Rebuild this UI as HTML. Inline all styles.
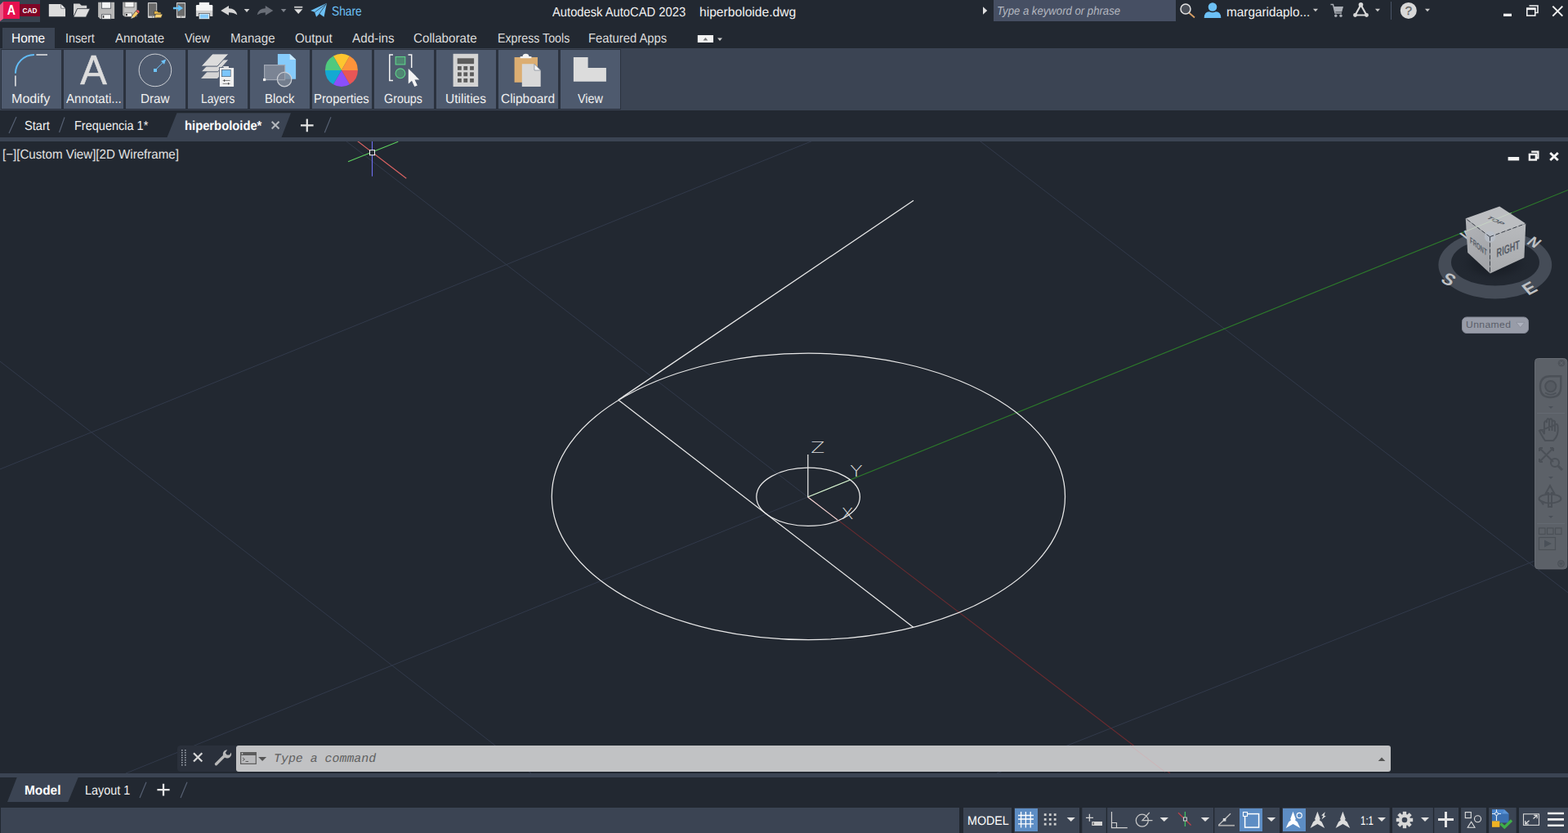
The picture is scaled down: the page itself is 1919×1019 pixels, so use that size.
<!DOCTYPE html>
<html lang="en">
<head>
<meta charset="utf-8">
<title>Autodesk AutoCAD 2023 - hiperboloide.dwg</title>
<style>
*{box-sizing:border-box;margin:0;padding:0}
html,body{width:1919px;height:1019px;overflow:hidden;background:#222831;}
body{position:relative;font-family:"Liberation Sans",sans-serif;color:#e6e6e6;font-size:15px;}
.abs{position:absolute}
.t{position:absolute;white-space:nowrap;line-height:1;transform-origin:0 0;text-rendering:geometricPrecision;}
svg{position:absolute;overflow:visible}
/* title bar */
#appbtn{left:0;top:0;width:49px;height:27px;background:#38424f}
#title1,#title2{top:8px;font-size:16px;color:#f0f0f0}
#search{left:1216px;top:0;width:223px;height:26px;background:#464f63}
#searchtx{left:1220px;top:7px;font-size:14.4px;font-style:italic;color:#b4b8c0}
/* menu */
.menu{top:40px;font-size:16px;color:#dcdcdc}
#hometab{left:3px;top:34px;width:64.2px;height:25px;background:#3b4453}
/* ribbon */
#ribbon{left:0;top:59px;width:1919px;height:76px;background:#3b4453}
.rb{position:absolute;top:60px;width:75px;height:74px;background:#4e5a6e;border:1px solid #2b323e}
.rl{top:114px;font-size:16px;color:#f0f0f0}
/* file tabs */
.ft{top:147px;font-size:16px;color:#f0f0f0}
#bar1{left:0;top:168px;width:1919px;height:5px;background:#3b4453}
#bar2{left:0;top:946px;width:1919px;height:5px;background:#3b4453}
#status{left:1px;top:988px;width:1918px;height:31px;background:#3b4453}
.lt{top:960px;font-size:16px;color:#f0f0f0}
</style>
</head>
<body>
<!-- ===== TITLE BAR ===== -->
<div id="appbtn" class="abs"></div>
<div id="title1" class="t" style="left:675.77px;transform:scaleX(0.9213)">Autodesk AutoCAD 2023</div>
<div id="title2" class="t" style="left:855.6px;transform:scaleX(0.9774)">hiperboloide.dwg</div>
<div id="search" class="abs"></div>
<div id="searchtx" style="left:1219.74px;transform:scaleX(0.9136)" class="t">Type a keyword or phrase</div>
<svg id="ticons" width="1919" height="1019" viewBox="0 0 1919 1019" style="left:0;top:0;pointer-events:none">
<!-- logo -->
<polygon points="0,6 4,2 4,23 0,26" fill="#e85a86"/>
<rect x="4" y="2" width="20" height="21" fill="#e6114f"/>
<rect x="24" y="5" width="25" height="15" fill="#7f0626"/>
<text x="8.8" y="18" font-family="Liberation Sans, sans-serif" font-weight="bold" font-size="15.8" fill="#fff" textLength="10.2" lengthAdjust="spacingAndGlyphs">A</text>
<text x="27.6" y="15.8" font-family="Liberation Sans, sans-serif" font-weight="bold" font-size="9.4" fill="#fff" textLength="17.8" lengthAdjust="spacingAndGlyphs">CAD</text>
<!-- new -->
<path d="M59.8 4.9H74.7L80 10.2V20.2H59.8Z" fill="#dcdcdc"/><path d="M74.7 4.9V10.2H80Z" fill="#f6f6f6" stroke="#3a3f48" stroke-width="0.6"/>
<!-- open -->
<path d="M90 4.4H97.4L99.8 6.8H106.2V10.5H94.4L90 20Z" fill="#d2d2d2"/><path d="M94.6 10.6H110.2L105.2 20.9H90Z" fill="#dedede" stroke="#2a2f38" stroke-width="0.7"/>
<!-- save -->
<path d="M120.1 2.8H140.1V23H122.5L120.1 20.3Z" fill="#b8b8b8"/><rect x="124.5" y="2.5" width="11.2" height="7.7" fill="#f4f4f4" stroke="#3a3f48" stroke-width="0.7"/><rect x="124.5" y="17.8" width="11.2" height="5.5" fill="#f4f4f4" stroke="#3a3f48" stroke-width="0.7"/><rect x="125.8" y="19" width="1.5" height="3" fill="#333"/>
<!-- saveas -->
<path d="M150.1 2.8H167.5V20.3H152.3L150.1 18.2Z" fill="#c2c2c2"/><rect x="150.1" y="2.8" width="1.6" height="15" fill="#9a9a9a"/><rect x="152.9" y="2.5" width="11.1" height="6.4" fill="#f4f4f4" stroke="#555" stroke-width="0.7"/><rect x="152.9" y="15.9" width="8.8" height="4.4" fill="#f4f4f4" stroke="#555" stroke-width="0.6"/><rect x="153.9" y="16.9" width="2" height="2.4" fill="#333"/>
<path d="M160.3 22.7L161.6 19.4L166.3 13.4L169.6 16.2L164.6 21.6Z" fill="#f6c868" stroke="#2a2f38" stroke-width="0.7"/><path d="M166.3 13.4L167.4 12.3Q168.6 11.6 169.6 12.6L170.5 13.6Q171 14.8 170.4 15.4L169.6 16.2Z" fill="#f25f5f" stroke="#2a2f38" stroke-width="0.5"/><path d="M160.3 22.7L161.4 19.9L163.6 21.6Z" fill="#c8c8c8"/>
<!-- open mobile -->
<rect x="180.9" y="3" width="11.3" height="19" rx="1" fill="#cfcfcf"/><rect x="182" y="4.2" width="9.2" height="15.4" fill="#6a6a6a"/><circle cx="186.5" cy="20.8" r="0.6" fill="#555"/>
<path d="M188.6 13.6H192.6L193.8 15H197V17.6H188.6Z" fill="#e6b84c" stroke="#2a2f38" stroke-width="0.6"/><path d="M190.5 17.2H199L197.2 21.8H188.9Z" fill="#fad274" stroke="#2a2f38" stroke-width="0.6"/>
<!-- save mobile -->
<rect x="215.9" y="3" width="11.2" height="19" rx="1" fill="#cfcfcf"/><rect x="216.9" y="4.2" width="9.2" height="15.4" fill="#6a6a6a"/><circle cx="221.5" cy="20.8" r="0.6" fill="#555"/>
<path d="M211.9 8.8H218V5.8L224 10L218 14V11.2H211.9Z" fill="#66c2fa"/>
<!-- print -->
<rect x="243.7" y="2.8" width="12.5" height="6.4" fill="#f6f6f6" stroke="#2a2f38" stroke-width="0.5"/><path d="M241 6.1H259.2Q260.3 6.1 260.3 7.2V12.9H239.9V7.2Q239.9 6.1 241 6.1Z" fill="#f4f4f4"/><rect x="243.7" y="5.8" width="12.5" height="3.2" fill="#f6f6f6"/><rect x="239.9" y="12.9" width="20.4" height="7.1" fill="#d0d0d0"/>
<rect x="243.3" y="16.3" width="13.2" height="7.1" fill="#f6f6f6" stroke="#2a2f38" stroke-width="0.6"/><rect x="244.7" y="17.5" width="10.5" height="4.9" fill="#86cbfb"/>
<!-- undo -->
<path d="M270.2 12.9L280 7V10.2Q288.6 10.2 290.3 18.2Q286 15.3 280 15.3V18.8Z" fill="#d6d6d6"/>
<path d="M298.7 10.9H305.4L302 14.9Z" fill="#d0d0d0"/>
<!-- redo -->
<path d="M334.3 12.9L324.8 7V10.2Q316.4 10.2 314.7 18.2Q319 15.3 324.8 15.3V18.8Z" fill="#696e77"/>
<path d="M343.8 10.9H350.4L347.1 14.9Z" fill="#7c818a"/>
<!-- customize -->
<rect x="360.1" y="7.8" width="10.2" height="1.9" fill="#c4c4c4"/><path d="M360.1 11.2H370.3L365.2 16.9Z" fill="#dedede"/>
<!-- share plane -->
<path d="M380.1 12.9L400 3.75L396.5 20.7L391 16.8L387.1 20.7L385.1 14.8Z" fill="#6cc0f5"/>
<path d="M399.4 4.6L385.3 14.9M399.4 4.6L390.8 16.9" stroke="#222831" stroke-width="0.7" fill="none"/>
<!-- search triangle -->
<path d="M1203 8.3L1208.2 13L1203 17.7Z" fill="#e0e0e0"/>
<!-- search icon -->
<line x1="1455" y1="15.5" x2="1462" y2="21.5" stroke="#d9a066" stroke-width="1.8"/>
<circle cx="1451" cy="11" r="6" fill="#4a4f58" stroke="#e4e4e4" stroke-width="1.5"/>
<!-- user -->
<circle cx="1484" cy="8.5" r="5.3" fill="#6cc0f5"/><path d="M1473.7 22Q1473.7 14.5 1480 14.2Q1484 16.5 1488 14.2Q1494.3 14.5 1494.3 22Z" fill="#6cc0f5"/>
<path d="M1607 10.8H1613L1610 14.3Z" fill="#c8c8c8"/>
<!-- cart -->
<path d="M1628.5 5.5H1631.5L1634 16H1642" fill="none" stroke="#a9adb4" stroke-width="1.4"/><path d="M1632 8H1644L1642.3 14.5H1633.6Z" fill="#a9adb4"/><circle cx="1634.8" cy="19.3" r="1.7" fill="#a9adb4"/><circle cx="1641" cy="19.3" r="1.7" fill="#a9adb4"/>
<!-- autodesk triangle -->
<path d="M1665.5 6L1658.5 18.5H1672.5Z" fill="none" stroke="#d8d8d8" stroke-width="2.2" stroke-linejoin="round"/><circle cx="1665.5" cy="5.8" r="2.8" fill="#d8d8d8"/><circle cx="1658.5" cy="18.5" r="2.4" fill="#d8d8d8"/><circle cx="1672.5" cy="18.5" r="2.4" fill="#d8d8d8"/>
<path d="M1683 10.8H1689L1686 14.3Z" fill="#c8c8c8"/>
<rect x="1702" y="2" width="1" height="22" fill="#4a5568"/>
<!-- help -->
<circle cx="1723.8" cy="12.9" r="10" fill="#d8d8d8"/>
<text x="1723.8" y="18.4" font-family="Liberation Sans, sans-serif" font-size="15.5" fill="#666" stroke="#666" stroke-width="0.3" text-anchor="middle">?</text>
<path d="M1744 10.8H1750L1747 14.3Z" fill="#c8c8c8"/>
<!-- window controls -->
<rect x="1840" y="16.7" width="10" height="3.3" fill="#f0f0f0"/>
<path d="M1871.5 7H1882V15.5H1879" fill="none" stroke="#f0f0f0" stroke-width="1.6"/><rect x="1868.8" y="10.3" width="10" height="8.8" fill="none" stroke="#f0f0f0" stroke-width="1.6"/><rect x="1868" y="9.5" width="11.6" height="2.6" fill="#f0f0f0"/>
<path d="M1900.3 7.6L1912.3 19.6M1912.3 7.6L1900.3 19.6" stroke="#f0f0f0" stroke-width="2"/>
<!-- ribbon minimize -->
<rect x="853.8" y="43" width="19.2" height="9" fill="#f2f2f2"/><path d="M860.5 49.6H866.3L863.4 46Z" fill="#777"/><path d="M878 46.5H884L881 50Z" fill="#d0d0d0"/>
</svg>
<div id="share" class="t" style="top:7px;font-size:16px;color:#6cc0f5;left:405.67px;transform:scaleX(0.8596)">Share</div>
<div id="user" class="t" style="top:8px;font-size:16px;color:#f0f0f0;left:1500.99px;transform:scaleX(0.958)">margaridaplo...</div>

<!-- ===== MENU ===== -->
<div id="hometab" class="abs"></div>
<div id="m1" class="t menu" style="color:#fff;left:14.18px;transform:scaleX(0.9651)">Home</div>
<div id="m2" class="t menu" style="left:79.88px;transform:scaleX(0.8926)">Insert</div>
<div id="m3" class="t menu" style="left:140.76px;transform:scaleX(0.9385)">Annotate</div>
<div id="m4" class="t menu" style="left:226.48px;transform:scaleX(0.8993)">View</div>
<div id="m5" class="t menu" style="left:281.57px;transform:scaleX(0.9432)">Manage</div>
<div id="m6" class="t menu" style="left:360.67px;transform:scaleX(0.9509)">Output</div>
<div id="m7" class="t menu" style="left:430.77px;transform:scaleX(0.9518)">Add-ins</div>
<div id="m8" class="t menu" style="left:505.93px;transform:scaleX(0.9484)">Collaborate</div>
<div id="m9" class="t menu" style="left:608.53px;transform:scaleX(0.8889)">Express Tools</div>
<div id="m10" class="t menu" style="left:720.08px;transform:scaleX(0.9241)">Featured Apps</div>
<!-- ===== RIBBON ===== -->
<div id="ribbon" class="abs"></div>
<div class="abs" style="left:1px;top:60px;width:759px;height:74px;background:#2b323e"></div>
<div class="rb" style="left:1px"></div>
<div class="rb" style="left:77px"></div>
<div class="rb" style="left:153px"></div>
<div class="rb" style="left:229px"></div>
<div class="rb" style="left:305px"></div>
<div class="rb" style="left:381px"></div>
<div class="rb" style="left:457px"></div>
<div class="rb" style="left:533px"></div>
<div class="rb" style="left:609px"></div>
<div class="rb" style="left:685px"></div>
<div id="rl0" class="t rl" style="left:14.02px;transform:scaleX(1.0041)">Modify</div>
<div id="rl1" class="t rl" style="left:80.82px;transform:scaleX(0.9407)">Annotati...</div>
<div id="rl2" class="t rl" style="left:172.29px;transform:scaleX(0.9518)">Draw</div>
<div id="rl3" class="t rl" style="left:245.73px;transform:scaleX(0.8607)">Layers</div>
<div id="rl4" class="t rl" style="left:323.85px;transform:scaleX(0.9307)">Block</div>
<div id="rl5" class="t rl" style="left:384.11px;transform:scaleX(0.9295)">Properties</div>
<div id="rl6" class="t rl" style="left:470.45px;transform:scaleX(0.8958)">Groups</div>
<div id="rl7" class="t rl" style="left:545.17px;transform:scaleX(0.9695)">Utilities</div>
<div id="rl8" class="t rl" style="left:612.93px;transform:scaleX(0.9649)">Clipboard</div>
<div id="rl9" class="t rl" style="left:707.31px;transform:scaleX(0.8941)">View</div>
<svg width="1919" height="1019" viewBox="0 0 1919 1019" style="left:0;top:0;pointer-events:none">
<!-- modify -->
<path d="M18.9 89.8A23 23 0 0 1 41.9 66.9" fill="none" stroke="#62bdf8" stroke-width="2"/>
<path d="M44.4 67H58M18.9 92.5V105.6" fill="none" stroke="#e8e8e8" stroke-width="1.5"/>
<!-- annotation A -->
<text transform="translate(114.4 103.4) scale(1 1.03)" font-family="Liberation Sans, sans-serif" font-size="48.8" fill="#dcdcdc" stroke="#dcdcdc" stroke-width="0.5" text-anchor="middle">A</text>
<!-- draw -->
<circle cx="189.9" cy="85.9" r="19.8" fill="none" stroke="#cdd0d5" stroke-width="1"/>
<path d="M190 85.8L200 75.8" stroke="#6ec4fb" stroke-width="1" fill="none"/><rect x="188" y="84" width="4" height="4" fill="#6ec4fb"/><path d="M203.2 72.6L197 74.8L201 78.8Z" fill="#6ec4fb"/>
<!-- layers -->
<path d="M246 96L260.1 81H280L266 96Z" fill="#d4d4d4"/>
<path d="M246 87.8L260.1 72.9H280L266.7 87.8Z" fill="#d8d8d8" stroke="#4e5a6e" stroke-width="1"/>
<path d="M246 81.1L260.1 65.9H280L266 81.1Z" fill="#dcdcdc" stroke="#4e5a6e" stroke-width="1"/>
<rect x="268" y="82.2" width="19" height="24.6" fill="#4e5a6e"/>
<rect x="268.9" y="83.1" width="17.2" height="22.9" fill="#f0f0f0"/><rect x="273.8" y="81" width="6.2" height="2.4" fill="#e4e4e4"/>
<rect x="271" y="85" width="11.6" height="9" fill="#5a6472"/><rect x="271.7" y="85.7" width="10.2" height="7.6" fill="#7cc6fb"/>
<path d="M272.6 98.5H281.6M272.6 102.4H281.6" stroke="#666" stroke-width="0.8" fill="none"/><path d="M274.6 97.3V99.7M279.6 101.2V103.6" stroke="#444" stroke-width="1.2" fill="none"/>
<!-- block -->
<path d="M339.9 65.9H354.7L362.1 72.9V96.7H339.9Z" fill="#86cbfb"/><path d="M354.7 65.9V72.9H362.1Z" fill="#c8e8fd"/>
<rect x="323.6" y="79.6" width="25" height="18" fill="#7b8494" stroke="#a0a7b3" stroke-width="1.2"/>
<circle cx="348.1" cy="97.1" r="8.7" fill="#7d8695" fill-opacity="0.8" stroke="#cdd0d6" stroke-width="1.2"/>
<path d="M348.6 88.5V97.6H339.5" stroke="#a0a7b3" stroke-width="1.1" fill="none" opacity="0.8"/>
<rect x="322" y="96" width="3.2" height="3.1" fill="#ececec"/>
<!-- properties wheel -->
<g transform="translate(417.9 85.9)">
<path d="M0 0L-10 -17.32A20 20 0 0 1 10 -17.32Z" fill="#fdc52f"/>
<path d="M0 0L10 -17.32A20 20 0 0 1 20 0Z" fill="#fd933a"/>
<path d="M0 0L20 0A20 20 0 0 1 10 17.32Z" fill="#e85656"/>
<path d="M0 0L10 17.32A20 20 0 0 1 -10 17.32Z" fill="#8b4ffb"/>
<path d="M0 0L-10 17.32A20 20 0 0 1 -20 0Z" fill="#14a9d2"/>
<path d="M0 0L-20 0A20 20 0 0 1 -10 -17.32Z" fill="#4fc97e"/>
</g>
<!-- groups -->
<path d="M481 67H476.8V98.5H481M499.5 67H503.7V83" fill="none" stroke="#f4f4f4" stroke-width="1.5"/>
<rect x="484.2" y="69.5" width="11.6" height="9.4" fill="#4f8672" stroke="#5fd38a" stroke-width="1.1"/>
<circle cx="490" cy="89.8" r="5.9" fill="#4f8672" stroke="#5fd38a" stroke-width="1.1"/>
<path d="M499.8 84V102.5L504 98.8L507.3 106L510.8 104.4L507.5 97.4H513.3Z" fill="#f4f4f4"/>
<!-- utilities -->
<rect x="554.6" y="65.8" width="30.6" height="40.2" fill="#d4d4d4"/><rect x="559.7" y="71.3" width="20.4" height="6.8" fill="#5c5c5c"/>
<g fill="#5c5c5c"><rect x="560" y="81" width="4.8" height="4.8"/><rect x="567.4" y="81" width="4.8" height="4.8"/><rect x="575.1" y="81" width="4.8" height="4.8"/>
<rect x="560" y="88.4" width="4.8" height="4.8"/><rect x="567.4" y="88.4" width="4.8" height="4.8"/><rect x="575.1" y="88.4" width="4.8" height="4.8"/>
<rect x="560" y="96" width="4.8" height="4.8"/><rect x="567.4" y="96" width="4.8" height="4.8"/><rect x="575.1" y="96" width="4.8" height="4.8"/></g>
<!-- clipboard -->
<rect x="629.6" y="70" width="28.4" height="30.8" fill="#dcae72"/>
<path d="M636.7 71.3V69H639.5Q640 65.8 643.5 65.8Q647 65.8 647.5 69H650.4V71.3Z" fill="#f4f4f4"/>
<path d="M638.8 78.3H654L661.7 86V106H638.8Z" fill="#d8d8d8"/><path d="M654 78.3V86H661.7Z" fill="#f6f6f6" stroke="#4e5a6e" stroke-width="0.5"/>
<!-- view -->
<path d="M701.9 70H719.6V83.1H741.9V99.8H701.9Z" fill="#dcdcdc"/>
</svg>

<!-- ===== FILE TABS ===== -->
<svg width="1919" height="1019" viewBox="0 0 1919 1019" style="left:0;top:0;pointer-events:none">
<polygon points="204.5,168 216.5,138.3 356,138.3 344.5,168" fill="#3b4453"/>
<path d="M20 143L11 163M79 143.5L72.5 162M405 143.3L397.3 162.3" stroke="#566072" stroke-width="1.2" fill="none"/>
<path d="M332.7 148.7L341.5 157.5M341.5 148.7L332.7 157.5" stroke="#b4b8be" stroke-width="2" fill="none"/>
<path d="M368 153.4H383.6M375.8 145.6V161.2" stroke="#e6e6e6" stroke-width="2.2" fill="none"/>
</svg>
<div id="ft1" class="t ft" style="left:30.22px;transform:scaleX(0.9139)">Start</div>
<div id="ft2" class="t ft" style="left:91.15px;transform:scaleX(0.9067)">Frequencia 1*</div>
<div id="ft3" class="t ft" style="font-weight:bold;color:#fff;left:226.13px;transform:scaleX(0.9231)">hiperboloide*</div>

<div id="bar1" class="abs"></div>
<!-- ===== CANVAS ===== -->
<svg id="cv" width="1919" height="773" viewBox="0 173 1919 773" style="left:0;top:173px;overflow:hidden">
<!-- faint grid lines -->
<g stroke="#323a4b" stroke-width="1" fill="none">
<line x1="988.6" y1="608" x2="420.2" y2="170"/>
<line x1="988.6" y1="608" x2="154" y2="946"/>
<line x1="0" y1="574" x2="1000" y2="170"/>
<line x1="0" y1="442" x2="650" y2="946"/>
<line x1="1196" y1="170" x2="1919" y2="725"/>
<line x1="1220" y1="946" x2="1919" y2="670"/>
</g>
<!-- axes -->
<line x1="988.6" y1="608" x2="1432" y2="946" stroke="#6a2b30" stroke-width="1.1"/>
<line x1="988.6" y1="608" x2="1919" y2="232.5" stroke="#2d7a2b" stroke-width="1.1"/>
<!-- geometry -->
<g stroke="#e9e9e9" stroke-width="1.25" fill="none">
<ellipse cx="989.4" cy="607.4" rx="314.1" ry="175.2"/>
<ellipse cx="989.1" cy="607.8" rx="63.3" ry="35.6"/>
<line x1="756.7" y1="489.2" x2="1118" y2="245.3"/>
<line x1="756.7" y1="489.2" x2="1118" y2="767.5"/>
</g>
<!-- UCS icon -->
<g stroke="#e2e2e2" stroke-width="1.3" fill="none">
<line x1="988.8" y1="608" x2="988.8" y2="556"/>
<line x1="988.6" y1="608" x2="1040" y2="587.3" stroke-width="1.1" stroke="#e0ecdc"/>
<line x1="988.6" y1="608" x2="1025" y2="636" stroke-width="1.1" stroke="#eedcdc"/>
</g>
<g font-family="DejaVu Sans, sans-serif" font-weight="200" font-size="19.5" fill="#dcdcdc">
<text x="992.2" y="554.4" textLength="17" lengthAdjust="spacingAndGlyphs">Z</text>
<text x="1040.2" y="582.6" textLength="15.4" lengthAdjust="spacingAndGlyphs">Y</text>
<text x="1029.3" y="634.6" textLength="15.6" lengthAdjust="spacingAndGlyphs">X</text>
</g>
<!-- cursor -->
<line x1="426" y1="197.7" x2="487.3" y2="173.3" stroke="#5fd35f" stroke-width="1.1"/>
<line x1="425" y1="163" x2="497.3" y2="218.3" stroke="#e06464" stroke-width="1.1"/>
<line x1="455.5" y1="170" x2="455.5" y2="215.7" stroke="#6f6ff2" stroke-width="1.1"/>
<rect x="452.5" y="183.7" width="6" height="6" fill="#222831" stroke="#f4f4f4" stroke-width="1"/>
<!-- viewport controls -->
<rect x="1845.6" y="192" width="13.6" height="4.4" fill="#f4f4f4"/>
<path d="M1874.2 185.7H1882.4V193.4H1880.5" fill="none" stroke="#f4f4f4" stroke-width="2.2"/><rect x="1871.9" y="188.9" width="8" height="6.6" fill="none" stroke="#f4f4f4" stroke-width="2.4"/>
<path d="M1897.2 187L1906.8 196M1906.8 187L1897.2 196" stroke="#f4f4f4" stroke-width="2.9"/>
<!-- viewcube compass -->
<defs><radialGradient id="shad" cx="0.5" cy="0.5" r="0.5"><stop offset="0" stop-color="#12161c" stop-opacity="0.9"/><stop offset="0.6" stop-color="#1a1f27" stop-opacity="0.55"/><stop offset="1" stop-color="#222831" stop-opacity="0"/></radialGradient>
<linearGradient id="fr" x1="0" y1="0" x2="0.3" y2="1"><stop offset="0" stop-color="#b2b4b8"/><stop offset="1" stop-color="#a2a4a8"/></linearGradient>
<linearGradient id="ri" x1="0" y1="0" x2="0" y2="1"><stop offset="0" stop-color="#b8babd"/><stop offset="1" stop-color="#a8aaad"/></linearGradient></defs>
<path fill-rule="evenodd" fill="#454c57" d="M1760.4 324a69.4 41.4 0 1 0 138.8 0a69.4 41.4 0 1 0 -138.8 0ZM1776 321a54 28.5 0 1 0 108 0a54 28.5 0 1 0 -108 0Z"/>
<ellipse cx="1829" cy="322" rx="46" ry="24" fill="url(#shad)"/>
<g font-family="Liberation Sans, sans-serif" font-weight="bold" fill="#bfc1c4" text-anchor="middle">
<text transform="translate(1878 296) rotate(28) skewX(-18)" y="6.5" font-size="18">N</text>
<text transform="translate(1773 341.5) rotate(28) skewX(-10)" y="7.5" font-size="21.5">S</text>
<text transform="translate(1872 352.5) rotate(-28) skewX(12)" y="7.5" font-size="21.5">E</text>
<text transform="translate(1796 286) rotate(-28) skewX(12)" y="6" font-size="16">W</text>
</g>
<!-- cube -->
<polygon points="1835.2,252.5 1867.3,273.4 1823.4,289.7 1793.7,267.2" fill="#bcbec1"/>
<polygon points="1793.7,267.2 1823.4,289.7 1823.7,334.6 1796.2,308.9" fill="url(#fr)"/>
<polygon points="1823.4,289.7 1867.3,273.4 1865.4,315.3 1823.7,334.6" fill="url(#ri)"/>
<circle cx="1823.6" cy="289.6" r="6.8" fill="#b9c0cc" opacity="0.7"/>
<g stroke="#3a3f48" stroke-width="1" fill="none" stroke-dasharray="5 2.5"><path d="M1823.5 289.7V334.6M1823.4 289.7L1793.7 267.2M1823.4 289.7L1867.3 273.4"/></g>
<g font-family="Liberation Sans, sans-serif" font-weight="bold" fill="#565c66">
<text transform="matrix(1 -0.39 0 1 1831.6 314.9)" font-size="14.8" textLength="28.3" lengthAdjust="spacingAndGlyphs">RIGHT</text>
<text transform="matrix(1 0.79 0 1 1799.1 297)" font-size="11" textLength="20.4" lengthAdjust="spacingAndGlyphs">FRONT</text>
<text transform="matrix(0.92 0.44 -0.775 0.287 1830.6 270)" font-size="10" y="3.45" text-anchor="middle">TOP</text>
</g>
<!-- green axis over cube (faint) -->
<line x1="1795" y1="282.5" x2="1850" y2="260.3" stroke="#cfe6c8" stroke-width="1" opacity="0.55"/>
<!-- unnamed pill -->
<rect x="1789.5" y="388" width="81" height="19.5" rx="5.5" fill="#989ca8" stroke="#868a97" stroke-width="1"/>
<path d="M1855.5 394.3H1866L1860.7 400.6Z" fill="#aeb2be" stroke="#8c909c" stroke-width="0.9"/>
<!-- nav bar -->
<rect x="1877.5" y="437.5" width="41" height="259.5" rx="5" fill="#1b2028"/><rect x="1878.5" y="438.5" width="39.3" height="257.5" rx="4" fill="#5c6168" stroke="#666b73" stroke-width="1"/>
<g stroke="#4b5057" fill="none" stroke-width="2">
<circle cx="1911" cy="444.3" r="4.3" fill="#4e535a" stroke="none"/><path d="M1909 442.3L1913 446.3M1913 442.3L1909 446.3" stroke-width="0.9" stroke="#666b73"/>
<path d="M1897.5 460.3H1910.3V473Q1910.3 486 1897.5 486Q1885 486 1885 473Q1885 460.3 1897.5 460.3Z" stroke-width="2.4"/><circle cx="1897.8" cy="472.6" r="6.6" fill="#555a61" stroke-width="2"/><path d="M1891 480.5Q1897.8 485 1904.6 480.5" stroke-width="1.6"/>
<path d="M1895 497H1901L1898 500Z" fill="#4a5058" stroke="none"/>
<line x1="1881" y1="505.5" x2="1915" y2="505.5" stroke-width="0.8" stroke="#666c75"/>
<path d="M1884 527Q1887 524 1890 531V517Q1891.5 513 1893 517V514Q1894.5 510 1896 514V527M1896 514Q1898 510.5 1899.5 514V527M1899.5 516Q1901.5 513 1903 516V528M1903 520Q1905.5 517 1906.5 521Q1908 533 1901 539H1891Q1888 535 1884 527Z"/>
<path d="M1884 548L1901 565M1901 548L1884 565M1884 548H1888M1884 548V552M1901 548H1897M1901 548V552M1884 565H1888M1884 565V561"/><circle cx="1903" cy="566" r="5"/><path d="M1907 570L1912 575" stroke-width="3"/>
<path d="M1895 583H1901L1898 586Z" fill="#4a5058" stroke="none"/>
<path d="M1895 620V603H1892L1897 594L1902 603H1899V620Z"/><ellipse cx="1897" cy="610" rx="13.5" ry="5.5"/><path d="M1890 614.5L1886 613L1889 617.5"/>
<path d="M1895 631H1901L1898 634Z" fill="#4a5058" stroke="none"/>
<line x1="1881" y1="640.5" x2="1915" y2="640.5" stroke-width="0.8" stroke="#666c75"/>
<rect x="1883.5" y="646" width="7.5" height="7.5" stroke-width="1.2"/><rect x="1893.5" y="646" width="7.5" height="7.5" stroke-width="1.2"/><rect x="1903.5" y="646" width="7.5" height="7.5" stroke-width="1.2"/>
<rect x="1883.5" y="657.5" width="20" height="15" stroke-width="1.2"/><path d="M1890 660.5L1899 665L1890 669.5Z" fill="#4a5058" stroke="none"/>
<circle cx="1910.5" cy="689.5" r="4" stroke-width="1" fill="#555a61"/><path d="M1908 688.5H1913L1910.5 691.5Z" fill="#4a5058" stroke="none"/>
</g>
</svg>
<div id="vplabel" class="t" style="top:182px;font-size:16px;color:#e2e2e2;left:2.67px;transform:scaleX(0.9444)">[−][Custom View][2D Wireframe]</div>
<div id="unnamed" class="t" style="top:391.5px;font-size:11.8px;color:#5a5e69;letter-spacing:0.4px;left:1793.75px;transform:scaleX(1.0253)">Unnamed</div>

<!-- ===== BOTTOM ===== -->
<div id="bar2" class="abs"></div>
<svg width="1919" height="1019" viewBox="0 0 1919 1019" style="left:0;top:0;pointer-events:none">
<polygon points="9,981 20.7,951 95.7,951 83.3,981" fill="#3b4453"/>
<path d="M179 956.7L171 976M229 956.7L221 976" stroke="#566072" stroke-width="1.2" fill="none"/>
<path d="M192.4 966.1H207.6M200 958.7V973.6" stroke="#e6e6e6" stroke-width="2.3" fill="none"/>
<!-- command line -->
<path d="M221 912H289V944H221Q217 944 217 940V916Q217 912 221 912Z" fill="#2a303b"/>
<rect x="289" y="912" width="1413" height="32" rx="3" fill="#c1c2c4"/>
<line x1="1383.5" y1="912" x2="1425.5" y2="944" stroke="#d9a9ad" stroke-width="1" opacity="0.55"/>
<g fill="#9aa0aa"><rect x="222" y="917" width="1.6" height="1.6"/><rect x="222" y="920" width="1.6" height="1.6"/><rect x="222" y="923" width="1.6" height="1.6"/><rect x="222" y="926" width="1.6" height="1.6"/><rect x="222" y="929" width="1.6" height="1.6"/><rect x="222" y="932" width="1.6" height="1.6"/><rect x="222" y="935" width="1.6" height="1.6"/>
<rect x="226" y="917" width="1.6" height="1.6"/><rect x="226" y="920" width="1.6" height="1.6"/><rect x="226" y="923" width="1.6" height="1.6"/><rect x="226" y="926" width="1.6" height="1.6"/><rect x="226" y="929" width="1.6" height="1.6"/><rect x="226" y="932" width="1.6" height="1.6"/><rect x="226" y="935" width="1.6" height="1.6"/></g>
<path d="M237 921.2L247.3 931.5M247.3 921.2L237 931.5" stroke="#d8d8d8" stroke-width="2.2" fill="none"/>
<!-- wrench -->
<path d="M264.5 934.8L274.5 924.8" stroke="#b8b8b8" stroke-width="3.4" stroke-linecap="round" fill="none"/>
<path d="M282.8 920.5A5.2 5.2 0 1 1 278.2 917.2L275.8 921L277.8 923.6L281 923.4Z" fill="#b8b8b8"/>
<!-- prompt icon -->
<rect x="294.6" y="920.6" width="18.7" height="13.8" fill="#b9babc" stroke="#5c5c5c" stroke-width="1.2"/><rect x="294" y="920" width="19.9" height="4" fill="#5c5c5c"/><rect x="295.8" y="921.2" width="1.4" height="1.5" fill="#ddd"/>
<path d="M297 927L299.5 928.8L297 930.6M300.5 931.5H304" stroke="#5c5c5c" stroke-width="1" fill="none"/>
<path d="M316.2 926H326.1L321.15 931Z" fill="#555"/>
<path d="M1686.7 931H1695.4L1691 926.6Z" fill="#555"/>
</svg>
<div id="lt1" class="t lt" style="font-weight:bold;color:#fff;left:30.38px;transform:scaleX(0.9619)">Model</div>
<div id="lt2" class="t lt" style="left:104.13px;transform:scaleX(0.899)">Layout 1</div>
<div id="cmd" class="t" style="top:922px;font-family:'Liberation Mono',monospace;font-style:italic;font-size:14.8px;color:#606060;left:334.54px;transform:scaleX(1.0068)">Type a command</div>

<div id="status" class="abs"></div>
<svg width="1919" height="1019" viewBox="0 0 1919 1019" style="left:0;top:0;pointer-events:none">
<!-- separators -->
<g fill="#222831">
<rect x="1174" y="987" width="5" height="32"/><rect x="1238" y="987" width="3.4" height="32"/><rect x="1321" y="987" width="3.3" height="32"/><rect x="1353.8" y="987" width="1.3" height="32"/>
<rect x="1485" y="987" width="1.3" height="32"/><rect x="1566" y="987" width="3.4" height="32"/><rect x="1700.7" y="987" width="3.3" height="32"/><rect x="1753.9" y="987" width="1.3" height="32"/>
<rect x="1785" y="987" width="3.1" height="32"/><rect x="1818.9" y="987" width="3.2" height="32"/><rect x="1855.7" y="987" width="3.3" height="32"/>
</g>
<!-- active buttons -->
<rect x="1242" y="989" width="28" height="28" fill="#5d8dc4"/>
<rect x="1517" y="989" width="28" height="28" fill="#5d8dc4"/>
<rect x="1570" y="989" width="28" height="28" fill="#5d8dc4"/>
<!-- grid -->
<path d="M1249.6 993V1012.5M1255.4 993V1012.5M1261.2 993V1012.5M1246 997.5H1265M1246 1002H1265M1246 1007.8H1265" stroke="#fff" stroke-width="1.3" fill="none"/>
<!-- snap dots -->
<g fill="#cfcfcf"><rect x="1277.8" y="995.2" width="2.8" height="2.8"/><rect x="1283.9" y="995.2" width="2.8" height="2.8"/><rect x="1289.8" y="995.2" width="2.8" height="2.8"/>
<rect x="1277.8" y="1001" width="2.8" height="2.8"/><rect x="1283.9" y="1001" width="2.8" height="2.8"/><rect x="1289.8" y="1001" width="2.8" height="2.8"/>
<rect x="1277.8" y="1006.8" width="2.8" height="2.8"/><rect x="1283.9" y="1006.8" width="2.8" height="2.8"/><rect x="1289.8" y="1006.8" width="2.8" height="2.8"/></g>
<g fill="#e2e2e2">
<path d="M1305.7 1000H1315.8L1310.75 1005Z"/><path d="M1419.6 1000H1430L1424.8 1005Z"/><path d="M1469.8 1000H1480.2L1475 1005Z"/><path d="M1550.7 1000H1561.2L1556 1005Z"/><path d="M1686 1000H1696L1691 1005Z"/><path d="M1739 1000H1749L1744 1005Z"/>
</g>
<!-- dyn input -->
<path d="M1329 1000.3H1338M1333.4 995.8V1004.8" stroke="#d4d4d4" stroke-width="1.3" fill="none"/><rect x="1336.3" y="1005" width="12.7" height="5" fill="#d4d4d4"/><rect x="1337.6" y="1006" width="1.2" height="3" fill="#555"/>
<!-- ortho -->
<path d="M1360.5 992.9V1012.6H1379.8M1360.5 1006.5H1366.5V1012.6" stroke="#d0d0d0" stroke-width="1.2" fill="none"/>
<!-- polar -->
<circle cx="1397.8" cy="1003.7" r="7.5" stroke="#c8c8c8" stroke-width="1.2" fill="none"/><path d="M1410.5 1003.7H1398L1406.8 994" stroke="#c8c8c8" stroke-width="1.2" fill="none"/>
<!-- isodraft -->
<line x1="1442" y1="994.2" x2="1457.6" y2="1009.5" stroke="#c04048" stroke-width="1.2"/><line x1="1450.4" y1="992.9" x2="1450.4" y2="1011" stroke="#40c060" stroke-width="1.3"/><rect x="1448.4" y="1000" width="4" height="4" fill="#3b4453" stroke="#e0e0e0" stroke-width="0.9"/>
<!-- otrack -->
<path d="M1491 1009.8H1511" stroke="#a8a8a8" stroke-width="1.8" fill="none"/><path d="M1491.3 1009.5L1506 995.2" stroke="#c8c8c8" stroke-width="1.2" fill="none"/><rect x="1496.8" y="1001" width="3.6" height="3.6" fill="#dcdcdc"/>
<!-- osnap -->
<rect x="1523.6" y="995.6" width="17" height="16.5" fill="none" stroke="#fff" stroke-width="1.5"/><rect x="1521.5" y="993.5" width="5" height="5" fill="#5d8dc4" stroke="#fff" stroke-width="1.1"/>
<!-- annotation icons -->
<path d="M0 -10.2L3.3 -1.3L2.5 0.3L5.3 2.5L8.8 9.9L0 4.9L-8.8 9.9L-5.3 2.5L-2.5 0.3L-3.3 -1.3Z" fill="#fff" transform="translate(1582.5 1003)"/>
<circle cx="1590.2" cy="997.5" r="3.1" fill="none" stroke="#fff" stroke-width="1.1"/>
<path d="M0 -10.2L3.3 -1.3L2.5 0.3L5.3 2.5L8.8 9.9L0 4.9L-8.8 9.9L-5.3 2.5L-2.5 0.3L-3.3 -1.3Z" fill="#dcdcdc" transform="translate(1612.4 1003)"/>
<path d="M1621.8 993.3L1617.1 997.5L1619.5 998L1617.4 1002.5L1622.8 998.3L1620.5 997.8Z" fill="#dcdcdc"/>
<path d="M0 -10.2L3.3 -1.3L2.5 0.3L5.3 2.5L8.8 9.9L0 4.9L-8.8 9.9L-5.3 2.5L-2.5 0.3L-3.3 -1.3Z" fill="#dcdcdc" transform="translate(1643.4 1003)"/>
<!-- gear -->
<g transform="translate(1719 1003)" fill="#d8d8d8"><circle r="7.2"/><g id="teeth"><rect x="-2.2" y="-10.2" width="4.4" height="20.4"/><rect x="-2.2" y="-10.2" width="4.4" height="20.4" transform="rotate(45)"/><rect x="-2.2" y="-10.2" width="4.4" height="20.4" transform="rotate(90)"/><rect x="-2.2" y="-10.2" width="4.4" height="20.4" transform="rotate(135)"/></g><circle r="3.3" fill="#3b4453"/></g>
<!-- plus -->
<path d="M1760 1002.4H1779M1769.5 993V1012" stroke="#e4e4e4" stroke-width="3" fill="none"/>
<!-- shapes -->
<rect x="1793.3" y="993.6" width="7" height="7" fill="none" stroke="#e0e0e0" stroke-width="1.1"/><circle cx="1808.5" cy="1001.7" r="4" fill="none" stroke="#e0e0e0" stroke-width="1.1"/><path d="M1800.6 1005.3L1805 1012.3H1796.2Z" fill="none" stroke="#e0e0e0" stroke-width="1.1"/>
<!-- cube check -->
<path d="M1826 990.3H1841L1846.6 995.5V1006.4H1826Z" fill="#3b6fb0"/><path d="M1841 990.3L1846.6 995.5H1838Z" fill="#5b94d6"/><path d="M1826 990.3H1841L1838 995.5H1826Z" fill="#4a86cf"/>
<path d="M1831.5 990.3V1004M1826 995.5H1837" stroke="#e8f0fa" stroke-width="1.1" fill="none"/><circle cx="1831.5" cy="995.5" r="1.9" fill="#3b6fb0" stroke="#fff" stroke-width="0.9"/>
<rect x="1826" y="1004.4" width="9.4" height="7.4" fill="#f0b323"/>
<path d="M1836.5 1007.5L1841.3 1012L1850 1003.5" stroke="#3fae49" stroke-width="3.2" fill="none"/>
<!-- fullscreen -->
<rect x="1864.5" y="995.8" width="19" height="13.6" fill="none" stroke="#d8d8d8" stroke-width="1.1"/>
<path d="M1876.5 1001.5L1881 997.5M1877.3 997.3H1881.2V1001.2M1871.5 1003.8L1867 1007.8M1866.8 1004V1008H1870.8" stroke="#e4e4e4" stroke-width="1.2" fill="none"/>
<!-- hamburger -->
<path d="M1894 995H1914M1894 1002.4H1914M1894 1009.8H1914" stroke="#f0f0f0" stroke-width="2.6" fill="none"/>
</svg>
<div id="st1" class="t" style="top:997px;font-size:15.2px;color:#fff;left:1183.64px;transform:scaleX(0.9403)">MODEL</div>
<div id="st2" class="t" style="top:997px;font-size:15.2px;color:#fff;left:1664.6px;transform:scaleX(0.7563)">1:1</div>

</body>
</html>
